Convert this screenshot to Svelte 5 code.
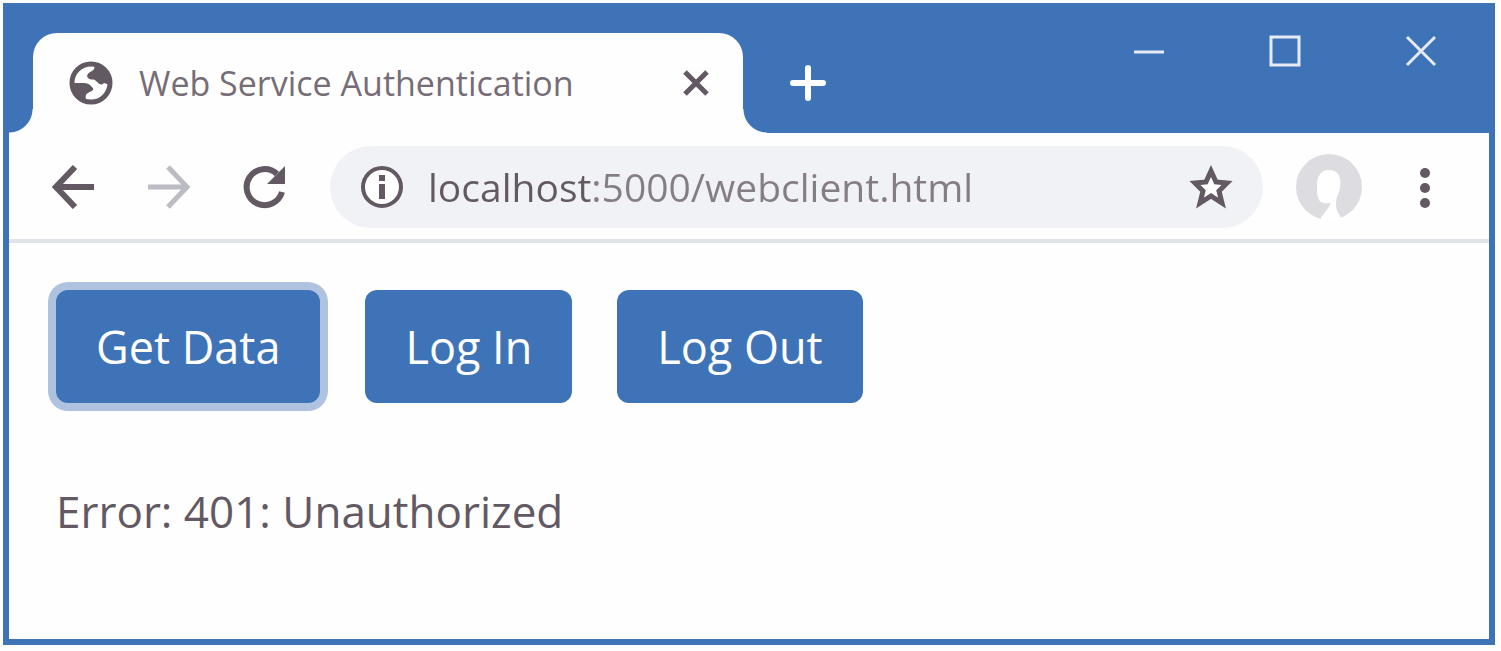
<script>
  let url = $state('localhost:5000/webclient.html');
  let message = $state('Error: 401: Unauthorized');
  const actions = ['Get Data', 'Log In', 'Log Out'];
  let focused = $state('Get Data');
</script>

<div class="screen">
  <div class="window">
    <header class="titlebar">
      <div class="tab">
        <svg class="favicon" viewBox="0 0 44 44" aria-hidden="true">
          <circle cx="22" cy="22" r="19" fill="#fff" stroke="#625962" stroke-width="5" />
          <path fill="#625962" d="M24 3 C26 6 26 8 23 10 C19 12 17 14 19 17 C22 20 25 17 27 20 C30 23 32 25 35 22 L41 24 C42 12 34 4 24 3Z" />
          <path fill="#625962" d="M3 22 H15 C20 22 22 25 24 27 C25 30 22 30 19 32 C15 34 18 37 16 40 C8 37 3 30 3 22Z" />
        </svg>
        <span class="tab-title">Web Service Authentication</span>
        <button class="plain tab-close" aria-label="Close tab">
          <svg width="26" height="26" viewBox="0 0 26 26"><path d="M2 2 L24 24 M24 2 L2 24" stroke="#625962" stroke-width="5" /></svg>
        </button>
      </div>
      <button class="plain new-tab" aria-label="New tab">
        <svg width="36" height="36" viewBox="0 0 36 36"><path d="M18 3 V33 M3 18 H33" stroke="#fff" stroke-width="6" stroke-linecap="round" /></svg>
      </button>
      <div class="window-controls">
        <button class="plain" aria-label="Minimize">
          <svg width="32" height="32" viewBox="0 0 32 32"><path d="M1 17 H31" stroke="#e6eaf3" stroke-width="3" /></svg>
        </button>
        <button class="plain" aria-label="Maximize">
          <svg width="32" height="32" viewBox="0 0 32 32"><rect x="2" y="2" width="28" height="28" fill="none" stroke="#e6eaf3" stroke-width="3" /></svg>
        </button>
        <button class="plain" aria-label="Close window">
          <svg width="32" height="32" viewBox="0 0 32 32"><path d="M2 2 L30 30 M30 2 L2 30" stroke="#e6eaf3" stroke-width="3" /></svg>
        </button>
      </div>
    </header>

    <nav class="toolbar">
      <button class="plain" aria-label="Back">
        <svg width="44" height="44" viewBox="0 0 44 44"><path d="M42 22 H5 M23 2 L4 22 L23 42" fill="none" stroke="#625962" stroke-width="6" /></svg>
      </button>
      <button class="plain" aria-label="Forward">
        <svg width="44" height="44" viewBox="0 0 44 44"><path d="M1 22 H39 M21 2 L40 22 L21 42" fill="none" stroke="#bcbcc4" stroke-width="5" /></svg>
      </button>
      <button class="plain" aria-label="Reload">
        <svg width="44" height="44" viewBox="0 0 44 44">
          <path d="M40 27 A18 18 0 1 1 35 9" fill="none" stroke="#625962" stroke-width="6" />
          <path d="M43 1 V19 H25Z" fill="#625962" />
        </svg>
      </button>
      <div class="omnibox">
        <svg width="44" height="44" viewBox="0 0 44 44" aria-hidden="true">
          <circle cx="22" cy="22" r="19" fill="#fff" stroke="#625962" stroke-width="4" />
          <path d="M19 10 h6 v6 h-6z M19 19 h6 v15 h-6z" fill="#625962" />
        </svg>
        <input type="text" aria-label="Address" spellcheck="false" bind:value={url} />
        <button class="plain" aria-label="Bookmark this page">
          <svg width="44" height="44" viewBox="0 0 44 44"><path d="M22 6 L27 17 L38 18 L30 26 L33 38 L22 31 L11 38 L14 26 L6 18 L17 17Z" fill="#fff" stroke="#625962" stroke-width="5" /></svg>
        </button>
      </div>
      <button class="plain profile" aria-label="Profile">
        <svg width="66" height="66" viewBox="0 0 66 66">
          <circle cx="33" cy="33" r="33" fill="#dddce1" />
          <path d="M33 16 C25 16 21 22 21 31 C21 38 21 45 25 48 C28 50 32 49 35 49 C33 53 29 59 26 62 L24 66 H46 L44 62 C40 57 39 50 41 43 C44 37 45 31 44 25 C43 19 39 16 33 16Z" fill="#fff" />
        </svg>
      </button>
      <button class="plain" aria-label="Menu">
        <svg width="12" height="44" viewBox="0 0 12 44" fill="#625962"><circle cx="6" cy="8" r="5" /><circle cx="6" cy="23" r="5" /><circle cx="6" cy="38" r="5" /></svg>
      </button>
    </nav>

    <main>
      <div class="actions">
        {#each actions as label}
          <button class="action" class:focused={focused === label} onclick={() => (focused = label)}>{label}</button>
        {/each}
      </div>
      <p>{message}</p>
    </main>
  </div>
</div>

<style>
  :global(body) {
    margin: 0;
    background: #fefefe;
  }
  .screen {
    box-sizing: border-box;
    min-height: 100vh;
    padding: 3px 6px 6px 3px;
    display: flex;
    font-family: 'Open Sans', 'Noto Sans', sans-serif;
    color: #625962;
  }
  .window {
    flex: 1;
    min-width: 0;
    border: 6px solid #3e74b7;
    border-top: 0;
    background: #fefefe;
  }
  svg {
    display: block;
    flex: none;
  }
  .plain {
    flex: none;
    padding: 0;
    border: 0;
    background: none;
  }
  .titlebar {
    display: flex;
    align-items: flex-start;
    height: 130px;
    padding: 0 46px 0 24px;
    background: #3e74b7;
  }
  .tab {
    position: relative;
    box-sizing: border-box;
    display: flex;
    align-items: center;
    flex: 0 1 710px;
    min-width: 0;
    height: 100px;
    margin-top: 30px;
    padding: 0 34px 0 36px;
    border-radius: 24px 24px 0 0;
    background: #fefefe;
  }
  .tab::before,
  .tab::after {
    content: '';
    position: absolute;
    bottom: 0;
    width: 24px;
    height: 24px;
  }
  .tab::before {
    right: 100%;
    background: radial-gradient(circle at 0 0, #3e74b7 23px, #fefefe 24px);
  }
  .tab::after {
    left: 100%;
    background: radial-gradient(circle at 100% 0, #3e74b7 23px, #fefefe 24px);
  }
  .favicon {
    width: 44px;
    height: 44px;
    margin-right: 26px;
  }
  .tab-title {
    flex: 1;
    min-width: 0;
    overflow: hidden;
    white-space: nowrap;
    font-size: 34px;
    line-height: 48px;
    color: #766d76;
  }
  .new-tab {
    margin: 62px 0 0 47px;
  }
  .window-controls {
    display: flex;
    gap: 104px;
    margin: 32px 6px 0 auto;
  }
  .toolbar {
    display: flex;
    align-items: center;
    height: 104px;
    padding: 2px 58px 0 43px;
    gap: 51px;
    border-bottom: 4px solid #e1e3ea;
  }
  .omnibox {
    flex: 1;
    min-width: 0;
    box-sizing: border-box;
    display: flex;
    align-items: center;
    height: 82px;
    margin: 0 -18px 0 -7px;
    padding: 0 30px;
    gap: 24px;
    border-radius: 41px;
    background: #f1f2f5;
  }
  .profile {
    margin-right: 6px;
  }
  input {
    flex: 1;
    min-width: 0;
    padding: 0;
    border: 0;
    outline: 0;
    font: 39px/56px 'Open Sans', 'Noto Sans', sans-serif;
    color: transparent;
    caret-color: #625962;
    background: linear-gradient(90deg, #625962 163px, #857d84 163px);
    background-clip: text;
  }
  main {
    padding: 47px;
  }
  .actions {
    display: flex;
    flex-wrap: wrap;
    gap: 45px;
  }
  .action {
    padding: 27px 40px 26px;
    border: 0;
    border-radius: 12px;
    background: #3e74b7;
    color: #fefefe;
    font-family: inherit;
    font-size: 45px;
    line-height: 60px;
  }
  .focused {
    box-shadow: 0 0 0 8px #afc3e1;
  }
  p {
    margin: 78px 0 0;
    font-size: 44px;
    line-height: 60px;
  }
</style>
